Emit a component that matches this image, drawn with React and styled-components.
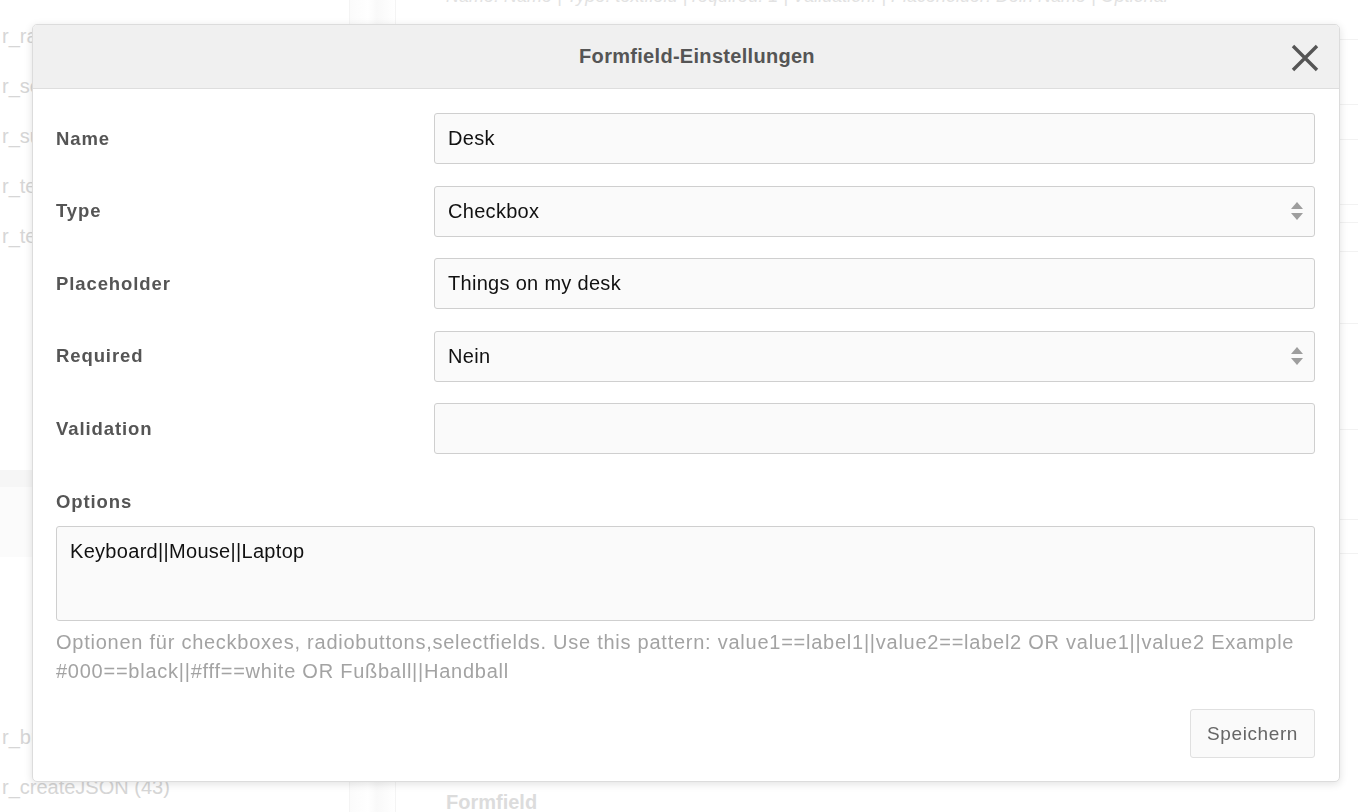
import React from "react";
import styled, { createGlobalStyle } from "styled-components";

const GlobalStyle = createGlobalStyle`
  html, body {
    margin: 0;
    padding: 0;
    height: 100%;
    overflow: hidden;
    background: #fff;
    font-family: "Liberation Sans", Arial, Helvetica, sans-serif;
  }
  #root {
    height: 100%;
  }
  * {
    box-sizing: border-box;
  }
`;

/* ---------- page behind the modal ---------- */

const Page = styled.div`
  display: flex;
  height: 100%;
`;

const Sidebar = styled.aside`
  width: 350px;
  flex-shrink: 0;
  padding-top: 11px;
  border-right: 1px solid #f4f4f4;
`;

const SideItem = styled.div`
  height: 50px;
  line-height: 50px;
  padding-left: 2px;
  width: ${(p) => (p.$full ? "auto" : "32px")};
  overflow: hidden;
  font-size: 20px;
  color: #d6d6d6;
  white-space: nowrap;
`;

const SideBand = styled.div`
  margin-top: ${(p) => p.$top}px;
  height: 87px;
  border-top: 17px solid #f6f6f6;
  background: #fbfbfb;
`;

const SideGroup = styled.div`
  margin-top: ${(p) => p.$top}px;
`;

const Gutter = styled.div`
  width: 45px;
  flex-shrink: 0;
  background: linear-gradient(90deg, #fbfbfb 0%, #fff 40%, #f9f9f9 60%, #fff 100%);
`;

const Content = styled.main`
  flex: 1;
  border-left: 1px solid #f4f4f4;
  padding-left: 50px;
  display: flex;
  flex-direction: column;
`;

const Meta = styled.div`
  margin-top: -14px;
  font-size: 18px;
  font-style: italic;
  color: #e2e2e2;
  white-space: nowrap;
  height: 53px;
`;

const TableRow = styled.div`
  height: ${(p) => p.$h}px;
  border-top: 1px solid #f2f2f2;
`;

const Heading = styled.div`
  margin-top: auto;
  margin-bottom: -2px;
  font-size: 20px;
  font-weight: bold;
  color: #dcdcdc;
`;

/* ---------- modal ---------- */

const Overlay = styled.div`
  position: fixed;
  inset: 0;
  padding: 24px 18px 0 32px;
`;

const Modal = styled.div`
  height: 758px;
  background: #fff;
  border-radius: 5px;
  border: 1px solid #dcdcdc;
  box-shadow: 0 2px 8px rgba(0, 0, 0, 0.12);
  display: flex;
  flex-direction: column;
  overflow: hidden;
`;

const Header = styled.header`
  position: relative;
  height: 64px;
  flex-shrink: 0;
  padding-left: 22px;
  background: #f0f0f0;
  border-bottom: 1px solid #dedede;
  display: flex;
  align-items: center;
  justify-content: center;
`;

const Title = styled.h2`
  margin: 0;
  font-size: 20px;
  letter-spacing: 0.3px;
  font-weight: bold;
  color: #555;
`;

const CloseButton = styled.button`
  position: absolute;
  right: 20px;
  top: 19px;
  width: 28px;
  height: 28px;
  padding: 0;
  border: none;
  background: none;
  cursor: pointer;
  display: flex;
  align-items: center;
  justify-content: center;
`;

const Body = styled.div`
  flex: 1;
  padding: 24px 24px 23px 23px;
  display: flex;
  flex-direction: column;
`;

const FieldGrid = styled.div`
  display: grid;
  grid-template-columns: 378px 1fr;
  row-gap: 21.5px;
  align-items: center;
`;

const Label = styled.label`
  font-size: 18.5px;
  font-weight: bold;
  letter-spacing: 0.9px;
  color: #555;
`;

const fieldBox = `
  width: 100%;
  height: 51px;
  padding: 0 13px;
  border: 1px solid #cfcfcf;
  border-radius: 3px;
  background: #fafafa;
  font-family: "Liberation Sans", Arial, sans-serif;
  font-size: 20px;
  letter-spacing: 0.3px;
  color: #111;
  outline: none;
`;

const Input = styled.input`
  ${fieldBox}
`;

const SelectWrap = styled.div`
  position: relative;
`;

const Select = styled.select`
  ${fieldBox}
  appearance: none;
  -webkit-appearance: none;
`;

const Arrows = styled.svg`
  position: absolute;
  right: 12px;
  top: 50%;
  transform: translateY(-50%);
  pointer-events: none;
`;

const OptionsLabel = styled(Label)`
  display: block;
  margin-top: 36px;
  line-height: 24px;
`;

const TextArea = styled.textarea`
  ${fieldBox}
  display: block;
  margin-top: 12px;
  height: 95px;
  padding: 12px 13px;
  resize: none;
  line-height: 24px;
`;

const Help = styled.p`
  margin: 7px 0 0;
  font-size: 20px;
  letter-spacing: 0.75px;
  line-height: 29px;
  color: #a3a3a3;
`;

const Footer = styled.div`
  margin-top: auto;
  display: flex;
  justify-content: flex-end;
`;

const SaveButton = styled.button`
  height: 49px;
  padding: 0 16px;
  border: 1px solid #e0e0e0;
  border-radius: 3px;
  background: #fafafa;
  font-family: "Liberation Sans", Arial, sans-serif;
  font-size: 19px;
  letter-spacing: 0.6px;
  color: #666;
  cursor: pointer;
`;

function SelectField({ value, options }) {
  return (
    <SelectWrap>
      <Select defaultValue={value}>
        {options.map((o) => (
          <option key={o}>{o}</option>
        ))}
      </Select>
      <Arrows width="12" height="18" viewBox="0 0 12 18">
        <polygon points="6,0 12,7 0,7" fill="#9e9e9e" />
        <polygon points="0,11 12,11 6,18" fill="#9e9e9e" />
      </Arrows>
    </SelectWrap>
  );
}

export default function App() {
  return (
    <>
      <GlobalStyle />
      <Page>
        <Sidebar>
          <SideGroup $top={0}>
            {["r_radio", "r_select", "r_submit", "r_text", "r_textarea"].map((t) => (
              <SideItem key={t}>{t}</SideItem>
            ))}
          </SideGroup>
          <SideBand $top={209} />
          <SideGroup $top={155}>
            <SideItem>r_button</SideItem>
            <SideItem $full>r_createJSON (43)</SideItem>
          </SideGroup>
        </Sidebar>
        <Gutter />
        <Content>
          <Meta>
            Name: Name | Type: textfield | required: 1 | Validation: | Placeholder: Dein Name | Optional
          </Meta>
          {[65, 35, 65, 18, 29, 72, 106, 90, 34, 31].map((h, i) => (
            <TableRow key={i} $h={h} />
          ))}
          <Heading>Formfield</Heading>
        </Content>
      </Page>

      <Overlay>
        <Modal>
          <Header>
            <Title>Formfield-Einstellungen</Title>
            <CloseButton aria-label="Schließen">
              <svg width="28" height="28" viewBox="0 0 28 28">
                <path d="M2 2 L26 26 M26 2 L2 26" stroke="#555" strokeWidth="3.4" strokeLinecap="butt" />
              </svg>
            </CloseButton>
          </Header>
          <Body>
            <FieldGrid>
              <Label>Name</Label>
              <Input defaultValue="Desk" />
              <Label>Type</Label>
              <SelectField value="Checkbox" options={["Textfield", "Checkbox", "Radiobutton", "Selectfield"]} />
              <Label>Placeholder</Label>
              <Input defaultValue="Things on my desk" />
              <Label>Required</Label>
              <SelectField value="Nein" options={["Ja", "Nein"]} />
              <Label>Validation</Label>
              <Input defaultValue="" />
            </FieldGrid>
            <OptionsLabel>Options</OptionsLabel>
            <TextArea defaultValue="Keyboard||Mouse||Laptop" />
            <Help>
              Optionen für checkboxes, radiobuttons,selectfields. Use this pattern: value1==label1||value2==label2 OR
              value1||value2 Example #000==black||#fff==white OR Fußball||Handball
            </Help>
            <Footer>
              <SaveButton>Speichern</SaveButton>
            </Footer>
          </Body>
        </Modal>
      </Overlay>
    </>
  );
}
